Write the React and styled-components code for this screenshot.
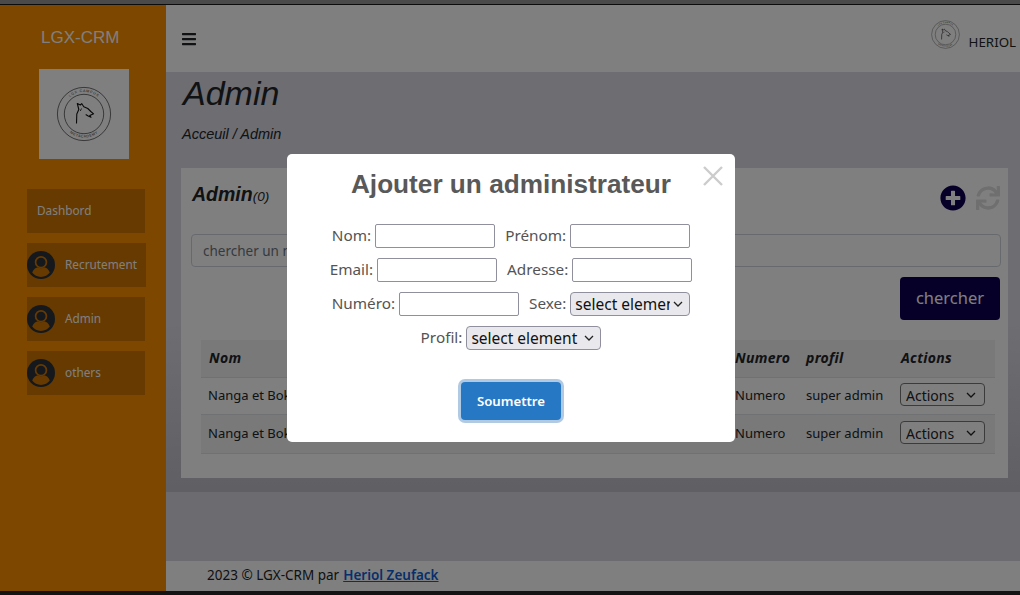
import React from 'react'
import styled, { createGlobalStyle } from 'styled-components'
import { FaBars, FaPlusCircle, FaSync } from 'react-icons/fa'

const ubuntuLike = `'Noto Sans', 'Open Sans', sans-serif`

const chevron = `url("data:image/svg+xml,%3Csvg xmlns='http://www.w3.org/2000/svg' width='10' height='6' viewBox='0 0 10 6'%3E%3Cpath d='M1 1l4 4 4-4' fill='none' stroke='%23222' stroke-width='1.300'/%3E%3C/svg%3E")`

const GlobalStyle = createGlobalStyle`
  html, body {
    margin: 0;
    padding: 0;
    height: 595px;
    overflow: hidden;
    background: #141414;
  }
  * {
    box-sizing: border-box;
  }
`

const Screen = styled.div`
  display: flex;
  flex-direction: column;
  height: 595px;
  font-family: ${ubuntuLike};
`
const TopStrip = styled.div`
  height: 5px;
  flex: none;
  background: #4a4a4a;
  border-bottom: 1px solid #0c0c0c;
`
const BottomStrip = styled.div`
  height: 4px;
  flex: none;
  background: #141414;
`
const Shell = styled.div`
  position: relative;
  flex: 1;
  display: flex;
  min-height: 0;
`
const Sidebar = styled.aside`
  width: 166px;
  flex: none;
  background: #fa8e00;
  padding-top: 23px;
`
const Brand = styled.div`
  font-family: 'Liberation Sans', sans-serif;
  font-size: 17px;
  line-height: 20px;
  color: #fff;
  padding-left: 41px;
`
const LogoBox = styled.div`
  width: 90px;
  height: 90px;
  margin: 21px 0 30px 39px;
  background: #fff;
`
const Nav = styled.nav`
  display: flex;
  flex-direction: column;
  gap: 10px;
  padding-left: 27px;
`
const NavItem = styled.a`
  display: flex;
  align-items: center;
  gap: 10px;
  width: ${(p) => p.$width || 118}px;
  height: 44px;
  padding-left: ${(p) => (p.$plain ? 10 : 0)}px;
  background: #cd7400;
  color: #fff;
  font-size: 11.8px;
  span {
    margin-bottom: 3px;
  }
`
const Main = styled.main`
  flex: 1;
  min-width: 0;
  display: flex;
  flex-direction: column;
  background: #d8d8e0;
`
const Topbar = styled.header`
  height: 67px;
  flex: none;
  display: flex;
  align-items: center;
  justify-content: space-between;
  padding: 0 4px 0 15px;
  background: #fff;
  color: #212529;
  font-size: 16px;
`
const UserBox = styled.div`
  display: flex;
  align-items: center;
  font-size: 13.300px;
  color: #212529;
  svg {
    margin-top: -8px;
  }
  span {
    margin-top: 6px;
  }
`
const Content = styled.section`
  height: 420px;
  flex: none;
  padding: 0 12px 0 15px;
  background: linear-gradient(#dadae4 0%, #dadae4 60%, #c0c0ca 97%, #bebec8 100%);
`
const Title = styled.h1`
  margin: 0;
  padding-left: 2px;
  font-family: 'Liberation Sans', sans-serif;
  font-size: 34px;
  font-style: italic;
  font-weight: 400;
  line-height: 42px;
  color: #212529;
`
const Crumb = styled.div`
  margin: 12px 0 26px 1px;
  font-family: 'Liberation Sans', sans-serif;
  font-size: 14.500px;
  font-style: italic;
  line-height: 16px;
  color: #212529;
`
const Card = styled.div`
  height: 310px;
  background: #fff;
  padding: 14px 8px 0 10px;
`
const CardHead = styled.div`
  display: flex;
  align-items: center;
  justify-content: space-between;
  height: 30px;
  margin-bottom: 22px;
`
const CardTitle = styled.h2`
  margin: 0 0 6px 1px;
  font-family: 'Liberation Sans', sans-serif;
  font-size: 19.500px;
  font-style: italic;
  font-weight: 700;
  color: #212529;
  small {
    font-size: 13.500px;
    font-weight: 400;
  }
`
const HeadIcons = styled.div`
  display: flex;
  align-items: center;
  gap: 10px;
  margin-top: 1px;
`
const SearchInput = styled.input`
  display: block;
  width: 810px;
  height: 33px;
  padding: 0 11px;
  border: 1px solid #ced4da;
  border-radius: 4px;
  background: #fff;
  font-family: ${ubuntuLike};
  font-size: 13.500px;
  &::placeholder {
    color: #6c757d;
  }
`
const SearchRow = styled.div`
  display: flex;
  justify-content: flex-end;
  width: 809px;
  margin-top: 10px;
`
const SearchButton = styled.button`
  width: 100px;
  height: 43px;
  padding: 0 0 2px;
  border: 0;
  border-radius: 4px;
  background: #0c0052;
  color: #fff;
  font-family: ${ubuntuLike};
  font-size: 16.500px;
`
const Table = styled.table`
  width: 794px;
  margin: 20px 0 0 10px;
  border-collapse: collapse;
  table-layout: fixed;
  font-size: 13px;
  color: #212529;
  th {
    height: 37px;
    padding: 0 8px 2px;
    text-align: left;
    font-size: 14px;
    font-style: italic;
    font-weight: 700;
    letter-spacing: 0.300px;
    background: #f2f2f2;
    border-bottom: 1px solid #dee2e6;
  }
  td {
    height: 37px;
    padding: 0 8px 2px;
    border-bottom: 1px solid #dee2e6;
    white-space: nowrap;
    overflow: hidden;
  }
  td:first-child,
  td:last-child {
    padding-left: 7px;
  }
  tbody tr:nth-child(even) td {
    height: 39px;
    background: #f2f2f2;
  }
`
const ActionSelect = styled.select`
  display: block;
  width: 85px;
  height: 23px;
  padding: 1px 0 0 5px;
  appearance: none;
  border: 1px solid #767676;
  border-radius: 4px;
  background: #fff ${chevron} no-repeat right 8px center;
  color: #212529;
  font-family: ${ubuntuLike};
  font-size: 14px;
`
const Spacer = styled.div`
  flex: 1;
`
const Footer = styled.footer`
  height: 30px;
  flex: none;
  display: flex;
  align-items: center;
  padding: 0 0 3px 41px;
  background: #fff;
  color: #212529;
  font-size: 13.500px;
  a {
    margin-left: 4px;
    color: #0d5fd8;
    font-weight: 600;
    text-decoration: underline;
  }
`
const Overlay = styled.div`
  position: absolute;
  inset: 0;
  display: flex;
  align-items: center;
  justify-content: center;
  background: rgba(0, 0, 0, 0.5);
`
const Modal = styled.div`
  position: relative;
  width: 448px;
  height: 288px;
  margin-left: 2px;
  border-radius: 5px;
  background: #fff;
  text-align: center;
`
const CloseButton = styled.button`
  position: absolute;
  top: 12px;
  right: 12px;
  display: flex;
  padding: 0;
  border: 0;
  background: none;
  color: #ccc;
`
const ModalTitle = styled.h2`
  margin: 0;
  padding-top: 14px;
  font-family: 'Liberation Sans', sans-serif;
  font-size: 26.200px;
  font-weight: 700;
  line-height: 32px;
  color: #595959;
`
const Form = styled.form`
  margin-top: 24px;
`
const FormRow = styled.div`
  display: flex;
  justify-content: center;
  align-items: center;
  gap: 4px;
  height: 24px;
  margin-bottom: 10px;
  font-size: 15.300px;
  color: #545454;
`
const FieldLabel = styled.label`
  margin: 0 0 2px ${(p) => p.$offset || 0}px;
`
const TextField = styled.input`
  width: 120px;
  height: 24px;
  padding: 1px 2px;
  border: 1px solid #8f8f9d;
  border-radius: 2px;
  background: #fff;
`
const ModalSelect = styled.select`
  width: ${(p) => p.$width}px;
  height: 24px;
  padding: 0 19px 2px 4px;
  appearance: none;
  border: 1px solid #8f8f9d;
  border-radius: 4px;
  background: #e9e9ed ${chevron} no-repeat right 6px center;
  color: #111;
  font-family: ${ubuntuLike};
  font-size: 15.500px;
`
const SubmitButton = styled.button`
  display: block;
  width: 100px;
  height: 38px;
  margin: 32px auto 0;
  border: 0;
  border-radius: 4px;
  background: #2778c4;
  box-shadow: 0 0 0 3px rgba(100, 150, 200, 0.5);
  color: #fff;
  font-family: ${ubuntuLike};
  font-size: 13.200px;
  font-weight: 600;
`

const CampusLogo = ({ size }) => (
  <svg width={size} height={size} viewBox="0 0 90 90" fill="none">
    <defs>
      <path id="campus-top" d="M23 45a22 22 0 0 1 44 0" />
      <path id="campus-bottom" d="M21.5 45a23.5 23.5 0 0 0 47 0" />
    </defs>
    <circle cx="45" cy="45" r="26.6" stroke="#333" strokeWidth="0.7" />
    <circle cx="45" cy="45" r="19.7" stroke="#333" strokeWidth="0.7" />
    <text fontFamily="'Liberation Sans', sans-serif" fontSize="3.6" letterSpacing="0.7" fill="#333" textAnchor="middle">
      <textPath href="#campus-top" startOffset="50%">LGX CAMPUS</textPath>
    </text>
    <text fontFamily="'Liberation Sans', sans-serif" fontSize="3.6" letterSpacing="0.5" fill="#333" textAnchor="middle">
      <textPath href="#campus-bottom" startOffset="50%">METACADEMY</textPath>
    </text>
    <path
      d="M37.5 54.5l.3-9.5 2-4.5-1.5-6 3 1.500 1.500-1.300 2 3 4 1.800 3 3 2.800 2.300-3.800 1.800 1.200 1.700-2.800-1.300-2.500-1.500"
      stroke="#111"
      strokeWidth="1.100"
      strokeLinejoin="round"
    />
    <path d="M42.500 39.500l-1.200 2.500" stroke="#111" strokeWidth="0.800" />
  </svg>
)

const UserDisc = () => (
  <svg width="28" height="28" viewBox="0 0 28 28" fill="none" style={{ flex: 'none' }}>
    <circle cx="14" cy="14" r="14" fill="#2a3138" />
    <circle cx="14" cy="11.200" r="5.400" stroke="#cd7400" strokeWidth="1.700" />
    <path
      d="M5.200 21.500c1.200-3.600 4.200-5 5.600-5.200 1.900 1.300 4.500 1.300 6.400 0 1.600.3 4.400 1.600 5.600 5.200-1.900 2.600-5.200 4.400-8.800 4.400s-6.900-1.800-8.800-4.400z"
      fill="#cd7400"
    />
  </svg>
)

const navItems = [
  { label: 'Recrutement', width: 119 },
  { label: 'Admin' },
  { label: 'others' },
]

const admins = ['Nanga et Bokally', 'Nanga et Bokally']

const App = () => (
  <Screen>
    <GlobalStyle />
    <TopStrip />
    <Shell>
      <Sidebar>
        <Brand>LGX-CRM</Brand>
        <LogoBox>
          <CampusLogo size={90} />
        </LogoBox>
        <Nav>
          <NavItem $plain>
            <span>Dashbord</span>
          </NavItem>
          {navItems.map((item) => (
            <NavItem key={item.label} $width={item.width}>
              <UserDisc />
              <span>{item.label}</span>
            </NavItem>
          ))}
        </Nav>
      </Sidebar>
      <Main>
        <Topbar>
          <FaBars size={16} />
          <UserBox>
            <CampusLogo size={47} />
            <span>HERIOL</span>
          </UserBox>
        </Topbar>
        <Content>
          <Title>Admin</Title>
          <Crumb>Acceuil / Admin</Crumb>
          <Card>
            <CardHead>
              <CardTitle>
                Admin<small>(0)</small>
              </CardTitle>
              <HeadIcons>
                <FaPlusCircle size={26} color="#0c0052" />
                <FaSync size={24} color="#dedede" />
              </HeadIcons>
            </CardHead>
            <SearchInput placeholder="chercher un membre" />
            <SearchRow>
              <SearchButton>chercher</SearchButton>
            </SearchRow>
            <Table>
              <colgroup>
                <col width="180" />
                <col width="180" />
                <col width="166" />
                <col width="71" />
                <col width="95" />
                <col width="102" />
              </colgroup>
              <thead>
                <tr>
                  <th>Nom</th>
                  <th>Email</th>
                  <th>Adresse</th>
                  <th>Numero</th>
                  <th>profil</th>
                  <th>Actions</th>
                </tr>
              </thead>
              <tbody>
                {admins.map((name, i) => (
                  <tr key={i}>
                    <td>{name}</td>
                    <td>Email</td>
                    <td>Adresse</td>
                    <td>Numero</td>
                    <td>super admin</td>
                    <td>
                      <ActionSelect>
                        <option>Actions</option>
                      </ActionSelect>
                    </td>
                  </tr>
                ))}
              </tbody>
            </Table>
          </Card>
        </Content>
        <Spacer />
        <Footer>
          2023 © LGX-CRM par <a href="#">Heriol Zeufack</a>
        </Footer>
      </Main>
      <Overlay>
        <Modal>
          <CloseButton aria-label="Close">
            <svg width="20" height="20" viewBox="0 0 20 20" fill="none">
              <path d="M1 1l18 18M19 1L1 19" stroke="currentColor" strokeWidth="2.400" />
            </svg>
          </CloseButton>
          <ModalTitle>Ajouter un administrateur</ModalTitle>
          <Form>
            <FormRow>
              <FieldLabel>Nom:</FieldLabel>
              <TextField />
              <FieldLabel $offset={6}>Prénom:</FieldLabel>
              <TextField />
            </FormRow>
            <FormRow>
              <FieldLabel>Email:</FieldLabel>
              <TextField />
              <FieldLabel $offset={6}>Adresse:</FieldLabel>
              <TextField />
            </FormRow>
            <FormRow>
              <FieldLabel>Numéro:</FieldLabel>
              <TextField />
              <FieldLabel $offset={6}>Sexe:</FieldLabel>
              <ModalSelect $width={120}>
                <option>select element</option>
              </ModalSelect>
            </FormRow>
            <FormRow>
              <FieldLabel>Profil:</FieldLabel>
              <ModalSelect $width={135}>
                <option>select element</option>
              </ModalSelect>
            </FormRow>
            <SubmitButton type="button">Soumettre</SubmitButton>
          </Form>
        </Modal>
      </Overlay>
    </Shell>
    <BottomStrip />
  </Screen>
)

export default App
